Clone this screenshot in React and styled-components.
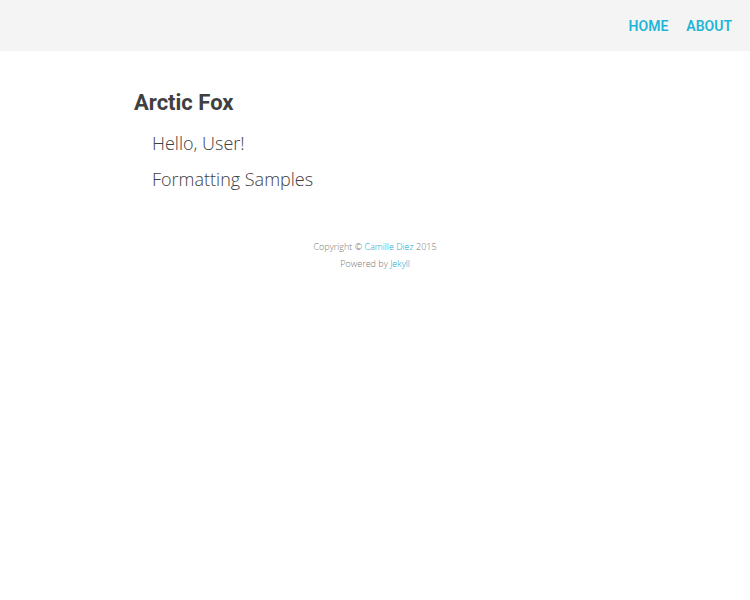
import React from "react";
import styled, { createGlobalStyle } from "styled-components";

const GlobalStyle = createGlobalStyle`
  body {
    margin: 0;
    background: #fff;
    color: #404040;
    font-family: "Open Sans", "Noto Sans", sans-serif;
    font-weight: 300;
  }
  a { text-decoration: none; }
`;

const Header = styled.header`
  display: flex;
  justify-content: flex-end;
  background: #f4f4f4;
  padding: 15px 18px 14px;
`;

const Nav = styled.nav`
  display: flex;
  gap: 18px;
`;

const NavLink = styled.a`
  color: #1fb5d8;
  font-family: "Roboto", sans-serif;
  font-size: 14px;
  line-height: 22px;
  font-weight: 600;
  text-transform: uppercase;
`;

const Main = styled.main`
  max-width: 482px;
  margin: 0 auto;
  padding-top: 34px;
`;

const Title = styled.h1`
  margin: 0;
  font-family: "Roboto", sans-serif;
  font-size: 22px;
  line-height: 36px;
  font-weight: 700;
`;

const PostList = styled.ul`
  list-style: none;
  margin: 4px 0 0;
  padding: 0 0 0 18px;
`;

const PostLink = styled.a`
  display: block;
  color: #404040;
  font-size: 18px;
  line-height: 36px;
`;

const Footer = styled.footer`
  margin-top: 41px;
  text-align: center;
  color: #777;
  font-size: 9px;
  line-height: 17px;
  p { margin: 0; }
  a { color: #0aa5cc; }
`;

export default function App() {
  return (
    <>
      <GlobalStyle />
      <Header>
        <Nav>
          <NavLink href="#home">Home</NavLink>
          <NavLink href="#about">About</NavLink>
        </Nav>
      </Header>
      <Main>
        <Title>Arctic Fox</Title>
        <PostList>
          <li><PostLink href="#hello">Hello, User!</PostLink></li>
          <li><PostLink href="#samples">Formatting Samples</PostLink></li>
        </PostList>
      </Main>
      <Footer>
        <p>Copyright © <a href="#author">Camille Diez</a> 2015</p>
        <p>Powered by <a href="#jekyll">Jekyll</a></p>
      </Footer>
    </>
  );
}
